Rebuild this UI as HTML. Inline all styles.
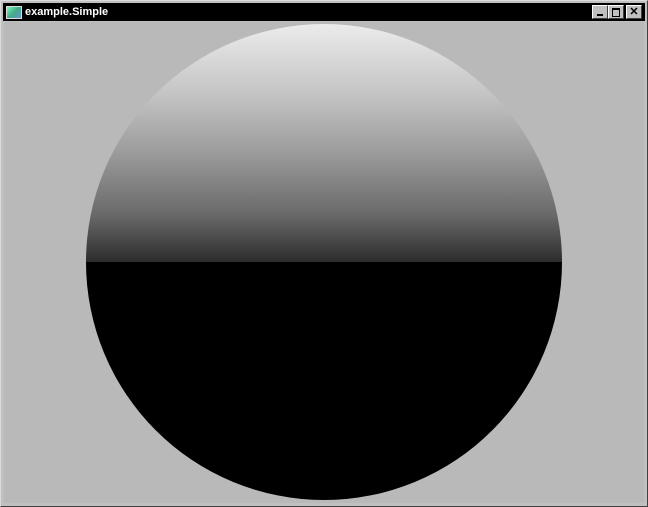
<!DOCTYPE html>
<html><head><style>
body{margin:0;width:648px;height:507px;overflow:hidden;background:#d4d0c8;font-family:"Liberation Sans",sans-serif}
.win{position:absolute;left:0;top:0;width:646px;height:505px;border-top:1px solid #dcdcdc;border-left:1px solid #dcdcdc;border-right:1px solid #404040;border-bottom:1px solid #404040;background:#c0c0c0}
.title{position:absolute;left:3px;top:3px;width:642px;height:18px;background:#000;color:#fff;font-weight:bold;font-size:11px;line-height:18px}
.title span{position:absolute;left:22px;top:0}
.ico{position:absolute;left:3px;top:3px;width:14px;height:11px;background:linear-gradient(135deg,#7fb 0,#4a8 50%,#69c 100%);border:1px solid #ddd}
.btn{position:absolute;top:2px;width:14px;height:13px;background:#c0c0c0;border-top:1px solid #fff;border-left:1px solid #fff;border-right:1px solid #404040;border-bottom:1px solid #404040;color:#000;font-size:11px;line-height:13px;text-align:center;box-sizing:border-box;width:16px;height:14px}
.content{position:absolute;left:4px;top:22px;width:640px;height:481px;background:#b9b9b9}
</style></head><body>
<div class="win"></div>
<div class="title"><div class="ico"></div><span>example.Simple</span>
<div class="btn" style="left:589px"><div style="position:absolute;left:4px;top:8px;width:6px;height:2px;background:#000"></div></div>
<div class="btn" style="left:605px"><div style="position:absolute;left:3px;top:2px;width:6px;height:6px;border:1px solid #000;border-top-width:2px"></div></div>
<div class="btn" style="left:623px;font-weight:bold">✕</div>
</div>
<div class="content">
<svg width="640" height="481" viewBox="4 22 640 481" style="position:absolute;left:0;top:0">
<defs><linearGradient id="g" x1="0" y1="23" x2="0" y2="262" gradientUnits="userSpaceOnUse">
<stop offset="0" stop-color="#ececec"/><stop offset="0.3" stop-color="#c4c4c4"/><stop offset="0.55" stop-color="#9a9a9a"/><stop offset="0.8" stop-color="#6a6a6a"/><stop offset="1" stop-color="#2c2c2c"/></linearGradient>
<clipPath id="c"><circle cx="324" cy="262" r="238"/></clipPath></defs>
<g clip-path="url(#c)"><rect x="80" y="20" width="490" height="242" fill="url(#g)"/><rect x="80" y="262" width="490" height="245" fill="#000"/></g>
</svg>
</div>
</body></html>
